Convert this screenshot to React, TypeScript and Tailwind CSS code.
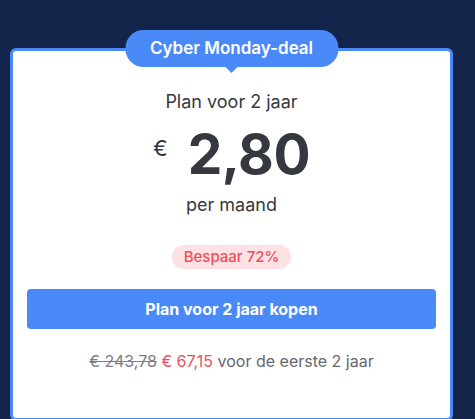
export default function App() {
  return (
    <div className="min-h-screen bg-[#12244a] pt-[48px] pl-[10px] font-['Inter',sans-serif]">
      <div className="relative flex w-[443px] flex-col items-center rounded-[6px] border-[3px] border-[#4a89f8] bg-white px-[14px] pt-[39px] pb-[45px]">
        {/* deal badge sitting on the top border */}
        <div className="absolute left-1/2 top-[-21px] -translate-x-1/2">
          <div className="relative flex h-[37px] w-[213px] items-center justify-center rounded-[18px] bg-[#4a89f8] text-[17px] font-semibold text-white">
            Cyber Monday-deal
            <span className="absolute bottom-[-6px] left-1/2 h-0 w-0 -translate-x-1/2 border-x-[7px] border-t-[7px] border-x-transparent border-t-[#4a89f8]" />
          </div>
        </div>

        <p className="text-[18px] leading-[24px] text-[#35393f]">Plan voor 2 jaar</p>

        <div className="mt-[11px] flex items-start text-[#35393f]">
          <span className="mt-[11px] mr-[20px] text-[22px] leading-[24px]">€</span>
          <span className="text-[55px] font-bold leading-[58px] tracking-[-0.5px]">2,80</span>
        </div>

        <p className="mt-[10px] text-[18px] leading-[24px] text-[#35393f]">per maand</p>

        <div className="mt-[28px] flex h-[24px] items-center rounded-full bg-[#fde1e4] px-[12px] text-[15px] font-medium text-[#ee4f5c]">
          Bespaar 72%
        </div>

        <button className="mt-[20px] h-[40px] w-full rounded-[4px] bg-[#4a89f8] text-[16px] font-bold text-white">
          Plan voor 2 jaar kopen
        </button>

        <p className="mt-[20px] text-[16px] leading-[24px] text-[#65686e]">
          <span className="text-[#7b7e84] line-through">€ 243,78</span>{" "}
          <span className="text-[#ee4f5c]">€ 67,15</span> voor de eerste 2 jaar
        </p>
      </div>
    </div>
  )
}
